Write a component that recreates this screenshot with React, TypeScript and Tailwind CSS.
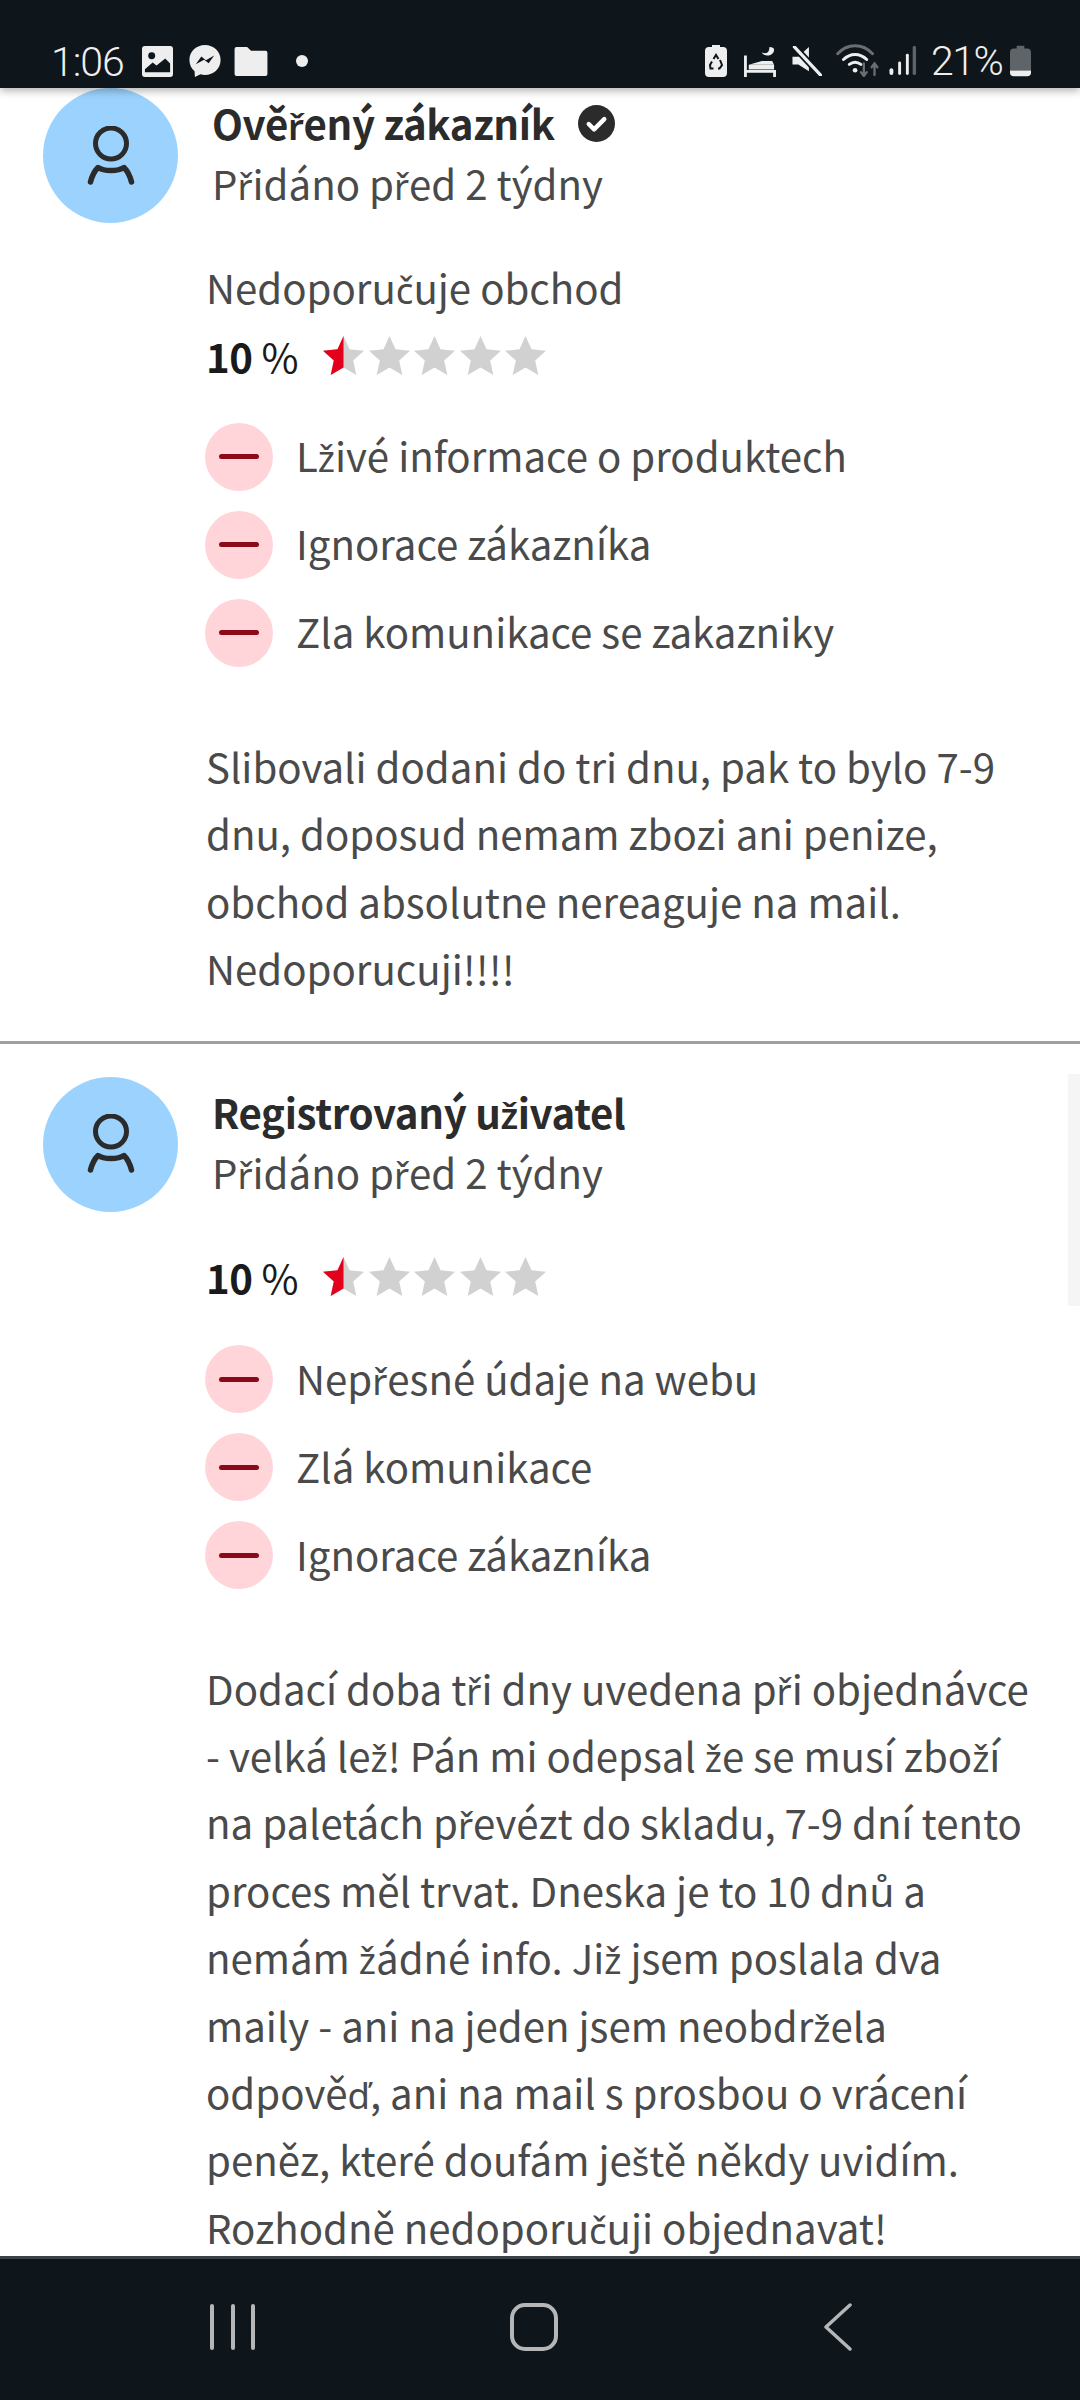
import React from "react";

const ROBOTO = "[font-family:Roboto,sans-serif] font-light";

function T({ children }: { children: string }) {
  const parts = children.split(/([řžčšďň])/);
  return (
    <>
      {parts.map((p, i) =>
        i % 2 === 1 ? (
          <span key={i} className="[font-family:'Noto_Sans',sans-serif] text-[0.91em] leading-none">
            {p}
          </span>
        ) : (
          p
        ),
      )}
    </>
  );
}

function Avatar() {
  return (
    <div className="w-[135px] h-[135px] rounded-full bg-[#9bd3fe] flex items-center justify-center shrink-0">
      <svg width="50" height="60" viewBox="0 0 50 60" fill="none" stroke="#2b2b2b" strokeLinecap="round" strokeLinejoin="round">
        <circle cx="25" cy="17.5" r="15.5" strokeWidth="5" />
        <path d="M4.5 56 C6 50 8.5 45 12 41.5 C18 45.5 32 45.5 38 41.5 C41.5 45 44 50 45.5 56" strokeWidth="5.5" />
      </svg>
    </div>
  );
}

function Star({ half }: { half?: boolean }) {
  const p = "M20.5 0 L26.5 13.2 L41 14.8 L30.2 24.6 L33.3 39 L20.5 31.6 L7.7 39 L10.8 24.6 L0 14.8 L14.5 13.2 Z";
  return (
    <svg width="41" height="39" viewBox="0 0 41 39">
      <path d={p} fill="#d1d1d1" />
      {half && <path d="M20.5 0 L14.5 13.2 L0 14.8 L10.8 24.6 L7.7 39 L20.5 31.6 Z" fill="#e2001a" />}
    </svg>
  );
}

function Rating({ className }: { className: string }) {
  return (
    <div className={`flex items-center ${className}`}>
      <span className="w-[117px] text-[40.2px] leading-[50px] text-[#1a1a1a]">
        <span className="font-semibold tracking-[-0.5px]">10</span> %
      </span>
      <div className="flex gap-[4.6px] -mt-[1px]">
        <Star half />
        <Star />
        <Star />
        <Star />
        <Star />
      </div>
    </div>
  );
}

function Minus({ text }: { text: string }) {
  return (
    <div className="flex items-center h-[88px]">
      <div className="mt-[3px] w-[68px] h-[68px] rounded-full bg-[#ffd5da] flex items-center justify-center shrink-0">
        <div className="w-[40px] h-[5px] rounded-full bg-[#8b0a1a]" />
      </div>
      <span className="ml-[23px] text-[40.2px] leading-[50px] text-[#4a4a4a]">
        <T>{text}</T>
      </span>
    </div>
  );
}

function Header({ title, verified }: { title: string; verified?: boolean }) {
  return (
    <div className="flex pl-[43px]">
      <Avatar />
      <div className="ml-[34px] flex flex-col pt-[5px]">
        <div className="flex items-center h-[60px]">
          <span className="text-[40.2px] leading-[60px] font-semibold tracking-[-0.35px] text-[#2b2b2b]">
            <T>{title}</T>
          </span>
          {verified && (
            <svg className="ml-[23px]" width="37" height="37" viewBox="0 0 38 38">
              <circle cx="19" cy="19" r="19" fill="#2b2b2b" />
              <path d="M11 19.5 L16.5 25 L27 14.5" fill="none" stroke="#fff" strokeWidth="4.5" strokeLinecap="round" strokeLinejoin="round" />
            </svg>
          )}
        </div>
        <div className="text-[40.2px] leading-[60px] text-[#4a4a4a]">
          <T>Přidáno před 2 týdny</T>
        </div>
      </div>
    </div>
  );
}

function Body({ lines }: { lines: string[] }) {
  return (
    <div className="pl-[206px] text-[40.2px] leading-[67.4px] text-[#4a4a4a]">
      {lines.map((l) => (
        <div key={l} className="whitespace-nowrap h-[67.4px]">
          <T>{l}</T>
        </div>
      ))}
    </div>
  );
}

function StatusBar() {
  return (
    <div className="relative z-10 h-[88px] shrink-0 bg-[#0e151b] shadow-[0_3px_8px_rgba(0,0,0,0.3)] text-[#eeeeee] flex items-start pt-[46px] pl-[51px] pr-[49px]">
      <span className={`${ROBOTO} w-[72px] text-[41px] leading-[32px] tracking-[-1px] whitespace-nowrap`}>1:06</span>
      <svg className="ml-[19px]" width="31" height="31" viewBox="0 0 32 32">
        <rect width="32" height="32" rx="3" fill="#eee" />
        <circle cx="10" cy="10" r="3.6" fill="#0e151b" />
        <path d="M3 27 L3 24 L11 17 L15 20 L24 13 L29 18 L29 27 Z" fill="#0e151b" />
      </svg>
      <svg className="ml-[15px] -mt-[1px]" width="34" height="33" viewBox="0 0 34 36">
        <path d="M17 0 C7.5 0 0 7 0 16.3 C0 21.4 2.2 25.7 5.6 28.6 L6 35 L12 32 C13.6 32.4 15.3 32.6 17 32.6 C26.5 32.6 34 25.6 34 16.3 C34 7 26.5 0 17 0 Z" fill="#eee" />
        <path d="M7 21 L13 12.5 L18 16.5 L27 11.5 L21 20 L16 16 Z" fill="#0e151b" />
      </svg>
      <svg className="ml-[12px] mt-[1px]" width="34" height="29" viewBox="0 0 34 30">
        <path d="M2 0 H13 L17 4 H32 A2 2 0 0 1 34 6 V28 A2 2 0 0 1 32 30 H2 A2 2 0 0 1 0 28 V2 A2 2 0 0 1 2 0 Z" fill="#eee" />
      </svg>
      <div className="ml-[28px] mt-[9px] w-[12px] h-[12px] rounded-full bg-[#eeeeee]" />
      <div className="ml-auto flex items-start -mt-[1px]">
        <svg width="22" height="32" viewBox="0 0 22 32">
          <path d="M7 0 H15 V2 H18 A4 4 0 0 1 22 6 V28 A4 4 0 0 1 18 32 H4 A4 4 0 0 1 0 28 V6 A4 4 0 0 1 4 2 H7 Z" fill="#eee" />
          <path d="M8.5 14 L11 10 L13.5 14 M15 15 L17 20 L14.5 23.5 H13 M8.5 23.5 H5.5 L5 20 L7 16.5" fill="none" stroke="#0e151b" strokeWidth="2" />
        </svg>
        <svg className="ml-[16px] mt-[1px]" width="34" height="31" viewBox="0 0 34 33" fill="none" stroke="#eee">
          <path d="M1.5 10 V33 M1.5 27 H32.5 V33" strokeWidth="3" />
          <path d="M5 20 H32 V25 H5 Z" fill="#eee" strokeWidth="0" />
          <path d="M5 20 L19 16 H30 L32 20 Z" fill="#eee" strokeWidth="0" />
          <path d="M27 1 C27 6 25 9 19 7 C21 12 32 11 32 4 C32 2 30 1 27 1 Z" fill="#eee" strokeWidth="0" />
        </svg>
        <svg className="ml-[15px] mt-[1px]" width="30" height="30" viewBox="0 0 30 31">
          <path d="M0 11 H6 L17 1 V26 L6 19 H0 Z" fill="#eee" />
          <path d="M2 1 L29 30" stroke="#0e151b" strokeWidth="7" />
          <path d="M2 1 L29 30" stroke="#eee" strokeWidth="3.4" strokeLinecap="round" />
        </svg>
        <svg className="ml-[14px] -mt-[1px]" width="44" height="33" viewBox="0 0 44 34" fill="none" strokeLinecap="round">
          <path d="M1 10 C11 -1 27 -1 37 10" stroke="#6a6e72" strokeWidth="3" />
          <path d="M7 16 C14 9 24 9 31 16" stroke="#eee" strokeWidth="3" />
          <path d="M13 21 C17 18 21 18 25 21" stroke="#eee" strokeWidth="3" />
          <circle cx="19" cy="27" r="2.4" fill="#eee" />
          <path d="M28 20 V32 M25 29 L28 33 L31 29" stroke="#6a6e72" strokeWidth="2.4" />
          <path d="M39 32 V20 M36 24 L39 20 L42 24" stroke="#6a6e72" strokeWidth="2.4" />
        </svg>
        <svg className="ml-[9px] mt-[1px]" width="28" height="29" viewBox="0 0 28 30">
          <rect x="0" y="23" width="4" height="7" rx="2" fill="#eee" />
          <rect x="9" y="16" width="3" height="14" rx="1.5" fill="#eee" />
          <rect x="17" y="8" width="3" height="22" rx="1.5" fill="#eee" />
          <rect x="24" y="0" width="3.5" height="30" rx="1.5" fill="#5f6468" />
        </svg>
        <span className={`${ROBOTO} ml-[14px] w-[71px] text-[41px] leading-[32px] tracking-[-1.5px] whitespace-nowrap`}>21%</span>
        <svg className="ml-[8px]" width="21" height="32" viewBox="0 0 22 32">
          <path d="M7 0 H15 V3 H18 A4 4 0 0 1 22 7 V26 H0 V7 A4 4 0 0 1 4 3 H7 Z" fill="#5f6468" />
          <path d="M0 26 H22 V28 A4 4 0 0 1 18 32 H4 A4 4 0 0 1 0 28 Z" fill="#eee" />
        </svg>
      </div>
    </div>
  );
}

function NavBar() {
  return (
    <div className="h-[144px] shrink-0 bg-[#0e151b] border-t-[3px] border-[#3a4148] flex items-start pt-[44px]">
      <div className="ml-[210px] mt-[1px] flex gap-[16.5px]">
        <div className="w-[4px] h-[46px] rounded-full bg-[#b4b6b8]" />
        <div className="w-[4px] h-[46px] rounded-full bg-[#b4b6b8]" />
        <div className="w-[4px] h-[46px] rounded-full bg-[#b4b6b8]" />
      </div>
      <div className="ml-[255px] w-[48px] h-[48px] rounded-[15px] border-[4px] border-[#b4b6b8]" />
      <svg className="ml-[265px]" width="30" height="48" viewBox="0 0 30 48" fill="none" stroke="#b4b6b8" strokeWidth="3.5" strokeLinecap="round" strokeLinejoin="round">
        <path d="M27 2 L3 24 L27 46" />
      </svg>
    </div>
  );
}

export default function App() {
  return (
    <div className="relative w-[1080px] h-[2400px] bg-white flex flex-col overflow-hidden [font-family:'Noto_Sans_CJK_SC','Noto_Sans',sans-serif]">
      <StatusBar />
      <div className="flex-1 min-h-0 overflow-hidden">
        <Header title="Ověřený zákazník" verified />
        <div className="pl-[206px] mt-[39px] text-[40.2px] leading-[50px] text-[#4a4a4a]">
          <T>Nedoporučuje obchod</T>
        </div>
        <Rating className="pl-[206px] mt-[19px]" />
        <div className="pl-[205px] mt-[30px] flex flex-col">
          <Minus text="Lživé informace o produktech" />
          <Minus text="Ignorace zákazníka" />
          <Minus text="Zla komunikace se zakazniky" />
        </div>
        <div className="mt-[57px]">
          <Body lines={["Slibovali dodani do tri dnu, pak to bylo 7-9", "dnu, doposud nemam zbozi ani penize,", "obchod absolutne nereaguje na mail.", "Nedoporucuji!!!!"]} />
        </div>
        <div className="mt-[39px] h-[3px] bg-[#a0a0a0]" />
        <div className="mt-[33px]">
          <Header title="Registrovaný uživatel" />
        </div>
        <Rating className="pl-[206px] mt-[40px]" />
        <div className="pl-[205px] mt-[32px] flex flex-col">
          <Minus text="Nepřesné údaje na webu" />
          <Minus text="Zlá komunikace" />
          <Minus text="Ignorace zákazníka" />
        </div>
        <div className="mt-[56px]">
          <Body lines={["Dodací doba tři dny uvedena při objednávce", "- velká lež! Pán mi odepsal že se musí zboží", "na paletách převézt do skladu, 7-9 dní tento", "proces měl trvat. Dneska je to 10 dnů a", "nemám žádné info. Již jsem poslala dva", "maily - ani na jeden jsem neobdržela", "odpověď, ani na mail s prosbou o vrácení", "peněz, které doufám ještě někdy uvidím.", "Rozhodně nedoporučuji objednavat!"]} />
        </div>
      </div>
      <NavBar />
      <div className="absolute right-0 top-[1074px] w-[12px] h-[232px] bg-[#f5f5f5]" />
    </div>
  );
}
